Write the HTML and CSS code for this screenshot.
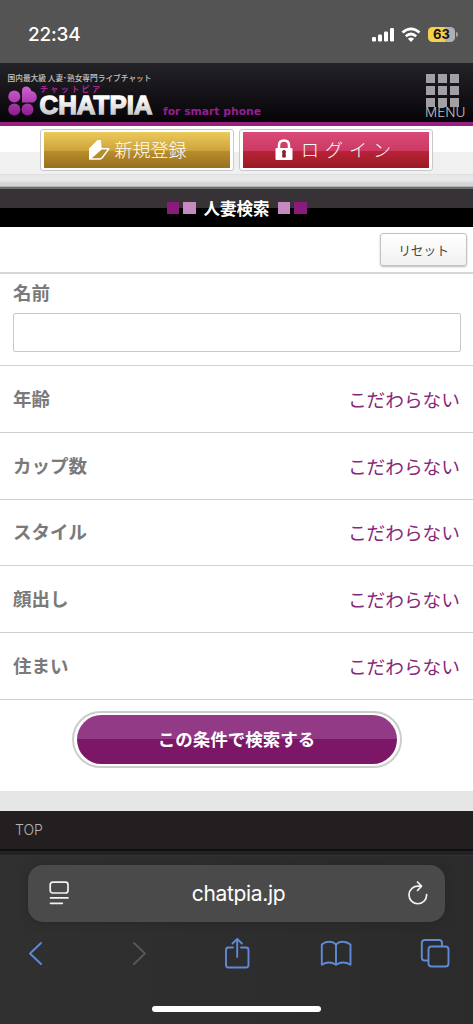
FILE: index.html
```html
<!DOCTYPE html>
<html lang="ja">
<head>
<meta charset="utf-8">
<meta name="viewport" content="width=device-width">
<title>人妻検索</title>
<link rel="stylesheet" href="styles.css">
</head>
<body>
<div class="status">
  <span class="clock">22:34</span>
  <div class="indicators">
    <svg width="22" height="16" viewBox="0 0 22 16" fill="#fff"><rect x="0" y="10" width="4" height="4.500" rx="1.200"/><rect x="6" y="7.500" width="4" height="7" rx="1.200"/><rect x="12" y="4.500" width="4" height="10" rx="1.200"/><rect x="18" y="1" width="4" height="13.500" rx="1.200"/></svg>
    <svg width="20" height="16" viewBox="0 0 20 16" fill="none" stroke="#fff" stroke-width="2.700"><path d="M1.500 5.600Q10-2 18.500 5.600M4.800 9.200Q10 4.800 15.200 9.200"/><path d="M10 14.900L6.900 11.700Q10 9.200 13.100 11.700Z" fill="#fff" stroke="none"/></svg>
    <span class="battery">63</span>
  </div>
</div>
<header class="header">
  <svg class="logo" width="270" height="59" viewBox="0 0 270 59">
    <defs>
      <linearGradient id="silver" x1="0" y1="0" x2="0" y2="1"><stop offset=".25" stop-color="#fff"/><stop offset=".85" stop-color="#c4c4c4"/></linearGradient>
      <linearGradient id="petal" x1="0" y1="23" x2="0" y2="52" gradientUnits="userSpaceOnUse"><stop stop-color="#cf62d3"/><stop offset="1" stop-color="#8e1d8f"/></linearGradient>
    </defs>
    <text class="tagline" x="7.500" y="18" textLength="144" lengthAdjust="spacingAndGlyphs">国内最大級 人妻･熟女専門ライブチャット</text>
    <text class="kana" x="40" y="29" textLength="60" lengthAdjust="spacing">チャットピア</text>
    <g fill="url(#petal)">
      <circle cx="14.300" cy="33.500" r="6"/><circle cx="14.300" cy="46.500" r="6"/><circle cx="27.500" cy="46.500" r="6"/>
      <path d="M22 39.500V27.500C22 22 30.500 22 31.300 28C38.500 28.500 38.500 39.500 32 39.500Z"/>
    </g>
    <text class="brand" x="39.500" y="51.300" textLength="113" lengthAdjust="spacingAndGlyphs" fill="url(#silver)" stroke="url(#silver)">CHATPIA</text>
    <text class="sub" x="163" y="51.500" textLength="98" lengthAdjust="spacingAndGlyphs">for smart phone</text>
  </svg>
  <div class="menu"><div class="dots"><i></i><i></i><i></i><i></i><i></i><i></i><i></i><i></i><i></i></div><span>MENU</span></div>
</header>
<nav class="account">
  <a class="frame"><span class="join"><svg width="22" height="22" viewBox="0 0 22 22"><path d="M1.500 9.500L9.500 1.500L12.500 1.500L13.300 11L1.500 20Z" fill="#fff" stroke="#fff" stroke-width="1" stroke-linejoin="round"/><path d="M13.500 9.800H20.800L14 19Q13 20 11 20H1.800L13.300 10Z" fill="#b48e30" stroke="#fff" stroke-width="1.400" stroke-linejoin="round"/></svg><b>新規登録</b></span></a>
  <a class="frame"><span class="login"><svg width="18" height="22" viewBox="0 0 18 22"><path d="M4 10V6.500Q4 1.500 9 1.500T14 6.500V10" fill="none" stroke="#fff" stroke-width="2.500"/><rect x=".5" y="9" width="17" height="12" rx="1" fill="#fff"/><path d="M9 11a2 2 0 0 0-1.400 3.400L7.200 15v3.500h3.600V15l-.4-.6A2 2 0 0 0 9 11Z" fill="#8d1d28"/></svg><b>ログイン</b></span></a>
</nav>
<h1 class="title"><i class="deep"></i><i class="pale"></i><span>人妻検索</span><i class="pale"></i><i class="deep"></i></h1>
<main>
  <div class="reset-row"><button class="reset">リセット</button></div>
  <div class="name"><label for="name">名前</label><input id="name" type="text"></div>
  <div class="row"><span>年齢</span><a>こだわらない</a></div>
  <div class="row"><span>カップ数</span><a>こだわらない</a></div>
  <div class="row"><span>スタイル</span><a>こだわらない</a></div>
  <div class="row"><span>顔出し</span><a>こだわらない</a></div>
  <div class="row"><span>住まい</span><a>こだわらない</a></div>
  <div class="submit-row"><button class="submit"><span>この条件で検索する</span></button></div>
</main>
<div class="band"></div>
<div class="top-link">TOP</div>
<footer class="browser">
  <div class="address">
    <svg width="20" height="24" viewBox="0 0 20 24" fill="none" stroke="#f2f2f2" stroke-width="1.700" stroke-linecap="round"><rect x="1.200" y="1.200" width="17.800" height="10.800" rx="2.500"/><path d="M1.500 16.800H19M1.500 22.300H13.300"/></svg>
    <span>chatpia.jp</span>
    <svg width="20" height="24" viewBox="0 0 20 24" fill="none" stroke="#f2f2f2" stroke-width="1.700" stroke-linecap="round" stroke-linejoin="round"><path d="M13 5.200H10.500A8.800 8.800 0 1 0 18.600 13.500M9.500 1L13.500 5.200L9.500 9.500"/></svg>
  </div>
  <div class="tools">
    <svg width="30" height="34" viewBox="0 0 30 34"><path d="M15 7L4 17.500L15 28"/></svg>
    <svg class="off" width="30" height="34" viewBox="0 0 30 34"><path d="M10 7L21 17.500L10 28"/></svg>
    <svg width="30" height="34" viewBox="0 0 30 34"><path d="M11 11.500H6.500Q4 11.500 4 14V29Q4 31.500 6.500 31.500H24Q26.500 31.500 26.500 29V14Q26.500 11.500 24 11.500H19M15.200 21V3M10.500 7.500L15.200 2.800L19.900 7.500"/></svg>
    <svg width="32" height="34" viewBox="0 0 32 34"><path d="M16 8.500Q13 5.500 9 5.800Q5 5.800 1.800 8.500V28.700Q9 24.300 16 28.700Q23 24.300 30.500 28.700V8.500Q27 5.800 23 5.800Q19 5.500 16 8.500ZM16 8.500V28.700"/></svg>
    <svg width="30" height="34" viewBox="0 0 30 34"><path d="M8 24.500H4.500Q1.800 24.500 1.800 21.500V7Q1.800 4 4.800 4H19Q22 4 22 7V10"/><rect x="8.500" y="10.500" width="20" height="20" rx="3"/></svg>
  </div>
  <div class="home"></div>
</footer>
</body>
</html>
```
FILE: styles.css
```css
* { box-sizing: border-box; }
body {
  margin: 0;
  width: 473px;
  height: 1024px;
  overflow: hidden;
  background: #fff;
  font-family: "Liberation Sans", "Noto Sans CJK JP", sans-serif;
}
svg { display: block; flex: none; }
button { font: inherit; padding: 0; }

.status {
  display: flex;
  justify-content: space-between;
  height: 63px;
  padding: 23px 14px 0 28px;
  background: #545454;
  color: #fff;
}
.clock { font: 500 19px/24px Inter, sans-serif; letter-spacing: -.2px; }
.indicators { display: flex; gap: 7px; padding: 4px 2px 0 0; }
.battery {
  position: relative;
  width: 27px;
  height: 15px;
  margin-right: 2px;
  border-radius: 4.500px;
  background: linear-gradient(90deg, #f6d04b 63%, #b0b0b0 63%);
  color: #161616;
  font: 700 13px/15px Inter, sans-serif;
  text-align: center;
}
.battery::after {
  content: "";
  position: absolute;
  left: 28px;
  top: 5px;
  width: 2px;
  height: 5px;
  border-radius: 0 2px 2px 0;
  background: #a0a0a0;
}

.header {
  display: flex;
  justify-content: space-between;
  height: 63px;
  border-bottom: 4px solid #98217f;
  background: linear-gradient(#242328, #060409);
}
.logo text { font-family: "Noto Sans CJK JP", sans-serif; }
.logo .tagline { font-size: 8px; font-weight: 500; fill: #c4c4c4; }
.logo .kana { font-size: 8px; font-weight: 700; fill: #9f2a97; }
.logo .brand { font: 700 26px "Liberation Sans", sans-serif; stroke-width: 1.300px; }
.logo .sub { font: 700 10.500px "DejaVu Sans", sans-serif; fill: #971e91; }
.menu {
  display: flex;
  flex-direction: column;
  width: 48px;
  padding-top: 11px;
  color: #c0c0c0;
  font: 300 13.500px/14px Inter, sans-serif;
}
.menu span { margin-top: -2px; }
.dots { display: grid; grid-template-columns: repeat(3, 9px); gap: 3px; padding-left: 1px; }
.dots i { height: 9px; background: #a2a0a5; }

.account {
  display: flex;
  justify-content: center;
  gap: 5px;
  height: 61px;
  padding-top: 3px;
  background: linear-gradient(#fff 0 26px, #f0f0f0 26px 48px, #dedede 48px 49px, #e8e8e8 49px 55px, #d5d5d5 57px 60px, #8d8f8d 61px);
}
.frame {
  width: 194px;
  height: 42px;
  padding: 2px 3px;
  border: 1px solid #c9c7cb;
  border-radius: 3px;
  background: #fff;
}
.frame span {
  display: flex;
  align-items: center;
  justify-content: center;
  height: 36px;
  color: #fff;
  font: 18px/36px "Noto Sans CJK JP", sans-serif;
}
.frame .join { gap: 5px; background: linear-gradient(#ecca5c, #cda33a 52%, #b98d2c 54%, #97701f); }
.frame .login { gap: 8px; background: linear-gradient(#d94a79, #cc3a63 52%, #b92237 54%, #981b23); }
.frame b { height: 38px; font-weight: 300; }
.login b { letter-spacing: 6px; }

.title {
  display: flex;
  align-items: center;
  justify-content: center;
  gap: 4px;
  height: 40px;
  margin: 0;
  border-top: 2px solid #6e6c6e;
  background: linear-gradient(#363236 0 19px, #000 19px);
  color: #fff;
  font: 700 16.500px/34px "Noto Sans CJK JP", sans-serif;
}
.title span { margin: 0 4px; }
.title i { width: 12.500px; height: 12.500px; }
.deep { background: #8a1b7a; }
.pale { background: #c58bc0; }

.reset-row {
  display: flex;
  justify-content: flex-end;
  height: 47px;
  padding: 6px 6px 0 0;
  border-bottom: 2px solid #d7d7d7;
}
.reset {
  width: 87px;
  height: 33px;
  border: 1px solid #c3c3c3;
  border-radius: 3px;
  background: linear-gradient(#fff, #f1f1f1);
  box-shadow: 0 1px 2px #bbb;
  color: #444;
  font: 12.700px/30px "Noto Sans CJK JP", sans-serif;
}
.name {
  display: flex;
  flex-direction: column;
  height: 92px;
  padding: 5px 13px 0;
  border-bottom: 1px solid #cfcfcf;
}
.name label, .row span { color: #7a7a7a; font: 700 18.500px/27px "Noto Sans CJK JP", sans-serif; }
.name input {
  width: 448px;
  height: 39px;
  margin-top: 7px;
  border: 1px solid #c8c8c8;
  border-radius: 2px;
  background: #fff;
}
.row {
  display: flex;
  align-items: center;
  justify-content: space-between;
  height: 66.800px;
  padding: 0 13px 1px;
  border-bottom: 1px solid #cfcfcf;
}
.row a { color: #87297b; font: 18.700px/27px "Noto Sans CJK JP", sans-serif; }
.submit-row { display: flex; justify-content: center; height: 91px; padding-top: 11px; }
.submit {
  width: 330px;
  height: 57px;
  padding: 2px 3px;
  border: 2px solid #cbcdcb;
  border-radius: 29px;
  background: #fff;
}
.submit span {
  display: block;
  height: 49px;
  border-radius: 25px;
  background: linear-gradient(#923a86 50%, #7c1768 50%);
  color: #fff;
  font: 700 17.500px/47px "Noto Sans CJK JP", sans-serif;
}

.band { height: 20px; background: #e6e6e6; }
.top-link {
  height: 44px;
  padding-left: 15px;
  background: linear-gradient(#231f21 0 38px, #101010 38px 40px, #242224 40px);
  color: #b4b4b4;
  font: 300 14px/38px Inter, sans-serif;
}
.browser {
  display: flex;
  flex-direction: column;
  height: 169px;
  padding-top: 9px;
  border-top: 1px solid #323232;
  background: linear-gradient(90deg, #303030, #2b2b2b);
}
.address {
  display: flex;
  align-items: center;
  justify-content: space-between;
  width: 417px;
  height: 57px;
  margin-left: 28px;
  padding: 0 17px 0 21px;
  border-radius: 15px;
  background: #4a4a4a;
  box-shadow: 0 1px 8px #272727;
  color: #fff;
  font: 21px/57px Inter, sans-serif;
  letter-spacing: -.35px;
}
.tools { display: flex; justify-content: space-between; padding: 14px 23px 0 26px; }
.tools svg { fill: none; stroke: #608ad6; stroke-width: 1.900; stroke-linecap: round; stroke-linejoin: round; }
.tools .off { stroke: #575757; }
.home { width: 169px; height: 6px; margin: 36px 0 0 152px; border-radius: 4px; background: #fff; flex: none; }
```
